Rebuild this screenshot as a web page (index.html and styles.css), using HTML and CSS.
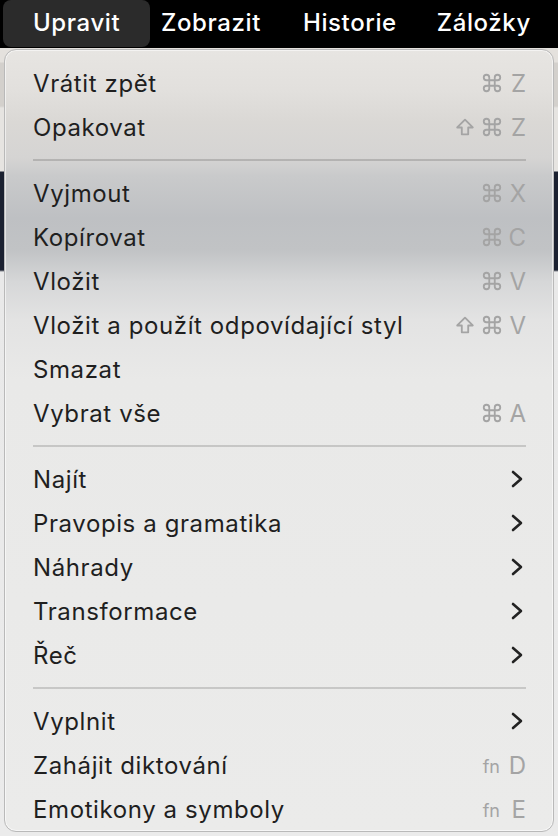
FILE: index.html
```html
<!DOCTYPE html>
<html lang="cs">
<head>
<meta charset="utf-8">
<title>Upravit</title>
<link rel="stylesheet" href="styles.css">
</head>
<body>
<div class="bar">
  <div class="bar-item active">Upravit</div>
  <div class="bar-item">Zobrazit</div>
  <div class="bar-item">Historie</div>
  <div class="bar-item">Záložky</div>
</div>
<div class="backdrop"></div>

<div class="menu">
  <div class="row"><span class="label">Vrátit zpět</span><span class="keys"><svg class="cmd" viewBox="0 0 24 24"><path d="M15 6v12a3 3 0 1 0 3-3H6a3 3 0 1 0 3 3V6a3 3 0 1 0-3 3h12a3 3 0 1 0-3-3"/></svg><span class="key">Z</span></span></div>
  <div class="row"><span class="label">Opakovat</span><span class="keys"><svg class="shift" viewBox="0 0 24 24"><path d="M8.5 20v-7.5H3.5L12 4l8.5 8.5h-5V20z"/></svg><svg class="cmd" viewBox="0 0 24 24"><path d="M15 6v12a3 3 0 1 0 3-3H6a3 3 0 1 0 3 3V6a3 3 0 1 0-3 3h12a3 3 0 1 0-3-3"/></svg><span class="key">Z</span></span></div>
  <div class="sep"></div>
  <div class="row"><span class="label">Vyjmout</span><span class="keys"><svg class="cmd" viewBox="0 0 24 24"><path d="M15 6v12a3 3 0 1 0 3-3H6a3 3 0 1 0 3 3V6a3 3 0 1 0-3 3h12a3 3 0 1 0-3-3"/></svg><span class="key">X</span></span></div>
  <div class="row"><span class="label">Kopírovat</span><span class="keys"><svg class="cmd" viewBox="0 0 24 24"><path d="M15 6v12a3 3 0 1 0 3-3H6a3 3 0 1 0 3 3V6a3 3 0 1 0-3 3h12a3 3 0 1 0-3-3"/></svg><span class="key">C</span></span></div>
  <div class="row"><span class="label">Vložit</span><span class="keys"><svg class="cmd" viewBox="0 0 24 24"><path d="M15 6v12a3 3 0 1 0 3-3H6a3 3 0 1 0 3 3V6a3 3 0 1 0-3 3h12a3 3 0 1 0-3-3"/></svg><span class="key">V</span></span></div>
  <div class="row"><span class="label">Vložit a použít odpovídající styl</span><span class="keys"><svg class="shift" viewBox="0 0 24 24"><path d="M8.5 20v-7.5H3.5L12 4l8.5 8.5h-5V20z"/></svg><svg class="cmd" viewBox="0 0 24 24"><path d="M15 6v12a3 3 0 1 0 3-3H6a3 3 0 1 0 3 3V6a3 3 0 1 0-3 3h12a3 3 0 1 0-3-3"/></svg><span class="key">V</span></span></div>
  <div class="row"><span class="label">Smazat</span></div>
  <div class="row"><span class="label">Vybrat vše</span><span class="keys"><svg class="cmd" viewBox="0 0 24 24"><path d="M15 6v12a3 3 0 1 0 3-3H6a3 3 0 1 0 3 3V6a3 3 0 1 0-3 3h12a3 3 0 1 0-3-3"/></svg><span class="key">A</span></span></div>
  <div class="sep"></div>
  <div class="row"><span class="label">Najít</span><svg class="chev" viewBox="0 0 12 18"><path d="M2 2l8 7-8 7"/></svg></div>
  <div class="row"><span class="label">Pravopis a gramatika</span><svg class="chev" viewBox="0 0 12 18"><path d="M2 2l8 7-8 7"/></svg></div>
  <div class="row"><span class="label">Náhrady</span><svg class="chev" viewBox="0 0 12 18"><path d="M2 2l8 7-8 7"/></svg></div>
  <div class="row"><span class="label">Transformace</span><svg class="chev" viewBox="0 0 12 18"><path d="M2 2l8 7-8 7"/></svg></div>
  <div class="row"><span class="label">Řeč</span><svg class="chev" viewBox="0 0 12 18"><path d="M2 2l8 7-8 7"/></svg></div>
  <div class="sep"></div>
  <div class="row"><span class="label">Vyplnit</span><svg class="chev" viewBox="0 0 12 18"><path d="M2 2l8 7-8 7"/></svg></div>
  <div class="row"><span class="label">Zahájit diktování</span><span class="keys"><span class="fn">fn</span><span class="key">D</span></span></div>
  <div class="row"><span class="label">Emotikony a symboly</span><span class="keys"><span class="fn">fn</span><span class="key">E</span></span></div>
</div>
</body>
</html>
```

FILE: styles.css
```css
html, body {
  margin: 0;
  padding: 0;
}
body {
  width: 558px;
  height: 836px;
  overflow: hidden;
  background: #000;
  font-family: Inter, "Noto Sans", "Liberation Sans", sans-serif;
  position: relative;
}

.bar {
  height: 48px;
  display: flex;
  align-items: stretch;
  padding-left: 3px;
  background: #000;
  color: #fff;
  font-size: 24px;
  font-weight: 500;
  letter-spacing: 0.6px;
}
.bar-item {
  display: flex;
  align-items: center;
  padding-bottom: 3px;
}
.bar-item + .bar-item {
  margin-left: 42px;
}
.bar-item:last-child {
  margin-left: 40px;
}
.bar-item.active {
  width: 147px;
  box-sizing: border-box;
  padding-left: 30px;
  background: #2b2b2b;
  border-radius: 8px;
  height: 47px;
}
.bar-item.active + .bar-item {
  margin-left: 11px;
}

.backdrop {
  height: 788px;
  background: linear-gradient(to bottom,
    #e4e1dd 0px, #e4e1dd 14px,
    #d3d0cc 15px, #d3d0cc 58px,
    #e6e4e1 60px, #e6e4e1 123px,
    #1b2131 124px, #1b2131 222px,
    #e9e9e9 224px, #ebebeb 100%);
}

.menu {
  position: absolute;
  left: 4px;
  top: 49px;
  width: 550px;
  height: 783px;
  box-sizing: border-box;
  padding: 11px 27px 0 28px;
  border: 1px solid #b9b9b9;
  border-radius: 12px;
  box-shadow: inset 0 0 0 1px rgba(255,255,255,0.55);
  background: linear-gradient(to bottom,
    #e7e5e2 0px,
    #e2e0dd 40px,
    #dad8d5 72px,
    #d5d4d3 108px,
    #c9cacb 126px,
    #bec0c3 168px,
    #c1c3c5 200px,
    #d6d7d8 232px,
    #e3e3e3 270px,
    #e9e9e8 330px,
    #ebebea 100%);
  overflow: hidden;
}

.row {
  height: 44px;
  display: flex;
  align-items: center;
  justify-content: space-between;
  font-size: 24px;
  letter-spacing: 0.6px;
  color: #1f1f1f;
}
.label {
  white-space: nowrap;
}
.keys {
  display: flex;
  align-items: center;
  color: #a4a4a4;
  letter-spacing: 0;
}
.key {
  width: 18px;
  margin-left: 5px;
  font-size: 24px;
  text-align: right;
}
.cmd, .shift {
  width: 22px;
  height: 22px;
  fill: none;
  stroke: #a4a4a4;
  stroke-width: 2;
  stroke-linejoin: round;
  stroke-linecap: round;
}
.shift {
  margin-right: 5px;
}
.fn {
  font-size: 18px;
  margin-top: 2px;
  margin-right: 3px;
}
.chev {
  width: 12px;
  height: 18px;
  margin-right: 3px;
  fill: none;
  stroke: #222;
  stroke-width: 2.6;
  stroke-linecap: round;
  stroke-linejoin: round;
}

.sep {
  height: 22px;
  display: flex;
  align-items: center;
}
.sep::before {
  content: "";
  display: block;
  width: 100%;
  height: 2px;
  background: rgba(0,0,0,0.15);
}
```
